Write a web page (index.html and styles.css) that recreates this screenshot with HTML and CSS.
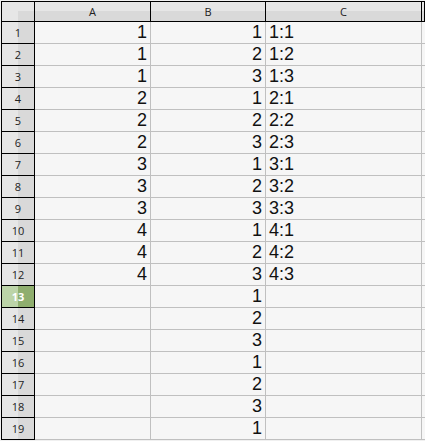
FILE: index.html
```html
<!DOCTYPE html>
<html lang="en">
<head>
  <meta charset="UTF-8">
  <title>Sheet1</title>
  <link rel="stylesheet" href="styles.css">
</head>
<body>
  <div class="sheet">
    <div class="corner"></div>
    <div class="col-head">A</div>
    <div class="col-head">B</div>
    <div class="col-head">C</div>
    <div class="col-head"></div>

    <div class="row-head">1</div><div class="cell num">1</div><div class="cell num">1</div><div class="cell">1:1</div><div class="cell"></div>
    <div class="row-head">2</div><div class="cell num">1</div><div class="cell num">2</div><div class="cell">1:2</div><div class="cell"></div>
    <div class="row-head">3</div><div class="cell num">1</div><div class="cell num">3</div><div class="cell">1:3</div><div class="cell"></div>
    <div class="row-head">4</div><div class="cell num">2</div><div class="cell num">1</div><div class="cell">2:1</div><div class="cell"></div>
    <div class="row-head">5</div><div class="cell num">2</div><div class="cell num">2</div><div class="cell">2:2</div><div class="cell"></div>
    <div class="row-head">6</div><div class="cell num">2</div><div class="cell num">3</div><div class="cell">2:3</div><div class="cell"></div>
    <div class="row-head">7</div><div class="cell num">3</div><div class="cell num">1</div><div class="cell">3:1</div><div class="cell"></div>
    <div class="row-head">8</div><div class="cell num">3</div><div class="cell num">2</div><div class="cell">3:2</div><div class="cell"></div>
    <div class="row-head">9</div><div class="cell num">3</div><div class="cell num">3</div><div class="cell">3:3</div><div class="cell"></div>
    <div class="row-head">10</div><div class="cell num">4</div><div class="cell num">1</div><div class="cell">4:1</div><div class="cell"></div>
    <div class="row-head">11</div><div class="cell num">4</div><div class="cell num">2</div><div class="cell">4:2</div><div class="cell"></div>
    <div class="row-head">12</div><div class="cell num">4</div><div class="cell num">3</div><div class="cell">4:3</div><div class="cell"></div>
    <div class="row-head active">13</div><div class="cell"></div><div class="cell num">1</div><div class="cell"></div><div class="cell"></div>
    <div class="row-head">14</div><div class="cell"></div><div class="cell num">2</div><div class="cell"></div><div class="cell"></div>
    <div class="row-head">15</div><div class="cell"></div><div class="cell num">3</div><div class="cell"></div><div class="cell"></div>
    <div class="row-head">16</div><div class="cell"></div><div class="cell num">1</div><div class="cell"></div><div class="cell"></div>
    <div class="row-head">17</div><div class="cell"></div><div class="cell num">2</div><div class="cell"></div><div class="cell"></div>
    <div class="row-head">18</div><div class="cell"></div><div class="cell num">3</div><div class="cell"></div><div class="cell"></div>
    <div class="row-head">19</div><div class="cell"></div><div class="cell num">1</div><div class="cell"></div><div class="cell"></div>
  </div>
</body>
</html>
```

FILE: styles.css
```css
html, body {
  margin: 0;
  height: 441px;
  overflow: hidden;
  background: #f0f0f0;
}
body {
  padding: 1px 0 0 1px;
  box-sizing: border-box;
}
.sheet {
  display: grid;
  grid-template-columns: 33px 116px 115px 156px 3px;
  grid-template-rows: 20px;
  grid-auto-rows: 22px;
  border-top: 1px solid #000;
  border-left: 1px solid #000;
  width: max-content;
}
.sheet > div {
  box-sizing: border-box;
  overflow: hidden;
  white-space: nowrap;
}
.corner, .col-head, .row-head {
  border-right: 1px solid #000;
  border-bottom: 1px solid #000;
  font-family: "Open Sans", "DejaVu Sans", sans-serif;
  font-size: 11px;
  color: #222;
  text-align: center;
}
.corner {
  background:
    linear-gradient(to right, #e6e6e6 50%, transparent 50%),
    linear-gradient(to bottom, #e6e6e6 50%, #d9d9d9 50%);
}
.col-head {
  line-height: 20px;
  background: linear-gradient(to bottom, #e6e6e6 50%, #d9d9d9 50%);
}
.row-head {
  line-height: 22px;
  background: linear-gradient(to right, #e6e6e6 50%, #d9d9d9 50%);
}
.row-head.active {
  color: #fff;
  font-weight: bold;
  background: linear-gradient(to right, #bcd4a8 50%, #8fae6e 50%);
}
.cell {
  background: #f6f6f6;
  border-right: 1px solid #c0c0c0;
  border-bottom: 1px solid #c0c0c0;
  font-family: "Liberation Sans", Arial, sans-serif;
  font-size: 18px;
  line-height: 21px;
  color: #111;
  padding: 0 3px;
}
.num {
  text-align: right;
}
```
